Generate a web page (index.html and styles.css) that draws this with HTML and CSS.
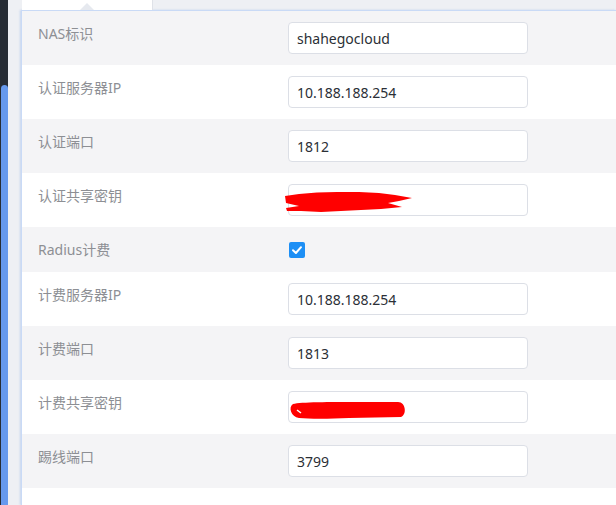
FILE: index.html
```html
<!DOCTYPE html>
<html lang="zh-CN">
<head>
<meta charset="utf-8">
<title>Radius 设置</title>
<link rel="stylesheet" href="styles.css">
</head>
<body>
<div class="app">
  <aside class="side"><div class="thumb"></div></aside>
  <main class="main">
    <div class="tabbar"><div class="tab"><span class="caret"></span></div></div>
    <section class="panel">
      <div class="row alt">
        <div class="label">NAS标识</div>
        <div class="field"><div class="input">shahegocloud</div></div>
      </div>
      <div class="row">
        <div class="label">认证服务器IP</div>
        <div class="field"><div class="input">10.188.188.254</div></div>
      </div>
      <div class="row alt">
        <div class="label">认证端口</div>
        <div class="field"><div class="input">1812</div></div>
      </div>
      <div class="row">
        <div class="label">认证共享密钥</div>
        <div class="field">
          <div class="input secret">
            <svg class="scribble s1" width="130" height="24" viewBox="0 0 130 24"><path d="M0,5 L14,3 L32,1.5 L52,1 L74,1 L94,2 L110,4 L127,7 L114,10 L103,12 L117,16 L96,18 L76,19 L56,20 L36,21 L16,20 L2,20 L1,17 L14,15 L1,12 Z" fill="#ff0000"/></svg>
          </div>
        </div>
      </div>
      <div class="row alt">
        <div class="label">Radius计费</div>
        <div class="field"><span class="check"><svg width="16" height="16" viewBox="0 0 16 16"><path d="M4 8.3 L6.9 11 L12 5.2" fill="none" stroke="#fff" stroke-width="2" stroke-linecap="round" stroke-linejoin="round"/></svg></span></div>
      </div>
      <div class="row">
        <div class="label">计费服务器IP</div>
        <div class="field"><div class="input">10.188.188.254</div></div>
      </div>
      <div class="row alt">
        <div class="label">计费端口</div>
        <div class="field"><div class="input">1813</div></div>
      </div>
      <div class="row">
        <div class="label">计费共享密钥</div>
        <div class="field">
          <div class="input secret">
            <svg class="scribble s2" width="120" height="18" viewBox="0 0 120 18"><path d="M4,2 C12,0 40,0 70,0 L109,0 C117,0 118,13 112,15 L60,16 C40,17 20,17 10,16 C2,15 -1,5 4,2 Z" fill="#ff0000"/><path d="M8,8 L12,11" stroke="#fff" stroke-width="1.5"/></svg>
          </div>
        </div>
      </div>
      <div class="row alt">
        <div class="label">踢线端口</div>
        <div class="field"><div class="input">3799</div></div>
      </div>
    </section>
  </main>
</div>
</body>
</html>
```
FILE: styles.css
```css
* { box-sizing: border-box; }
html, body { margin: 0; padding: 0; }
body {
  width: 616px;
  height: 505px;
  overflow: hidden;
  background: #eef0f4;
  font-family: "Noto Sans", "Noto Sans CJK SC", sans-serif;
}
.app {
  display: flex;
  height: 505px;
}
.side {
  width: 8px;
  flex: none;
  background: #262c35;
  padding-top: 85px;
}
.thumb {
  margin-left: 1px;
  width: 7px;
  height: 100%;
  background: #6699ee;
  border-radius: 4px 4px 0 0;
}
.main {
  flex: 1;
  padding-left: 13px;
  display: flex;
  flex-direction: column;
}
.tabbar {
  height: 10px;
  display: flex;
}
.tab {
  position: relative;
  margin-left: 1px;
  width: 131px;
  background: #ffffff;
  border-right: 1px solid #dfe2e8;
}
.caret {
  position: absolute;
  left: 58px;
  top: 3px;
  width: 0;
  height: 0;
  border-left: 7px solid transparent;
  border-right: 7px solid transparent;
  border-bottom: 7px solid #e6e9ef;
}
.panel {
  flex: 1;
  background: #ffffff;
  border-top: 1px solid #c9daf6;
  border-left: 1px solid #c9daf6;
  box-shadow: -1px 0 2px rgba(120, 160, 230, 0.35);
}
.row {
  display: grid;
  grid-template-columns: 266px 240px;
  padding: 11px 0;
  background: #ffffff;
}
.row.alt { background: #f4f4f6; }
.label {
  padding: 1px 0 0 16px;
  font-size: 14px;
  line-height: 22px;
  color: #8d8f94;
}
.field {
  display: flex;
  align-items: flex-start;
}
.input {
  position: relative;
  width: 240px;
  height: 32px;
  padding: 0 8px;
  border: 1px solid #dcdfe6;
  border-radius: 4px;
  background: #ffffff;
  display: flex;
  align-items: center;
  font-size: 14px;
  color: #2b2f36;
}
.scribble {
  position: absolute;
  overflow: visible;
}
.s1 { left: -4px; top: 6px; }
.s2 { left: 0; top: 10px; }
.check {
  margin-top: 4px;
  margin-left: 1px;
  width: 16px;
  height: 16px;
  border-radius: 2px;
  background: #1d8ff5;
  display: flex;
}
```
